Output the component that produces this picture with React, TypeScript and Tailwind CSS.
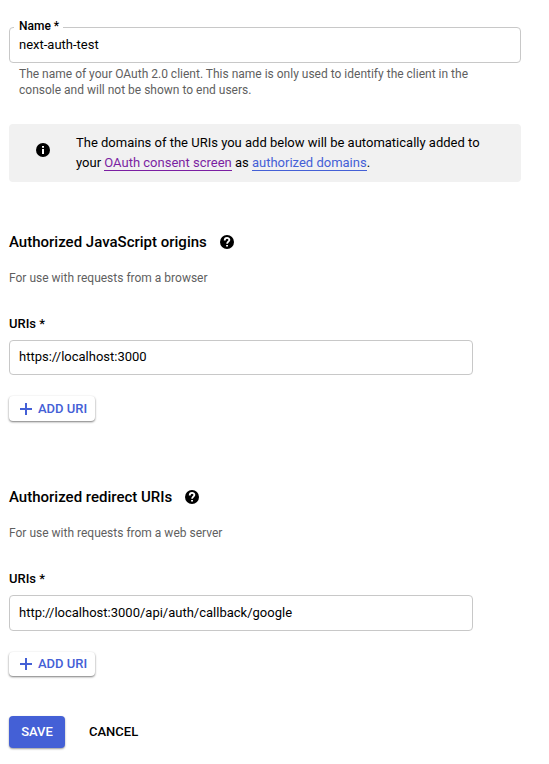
import React from "react";

function Help() {
  return (
    <svg viewBox="0 0 14 14" className="h-[14px] w-[14px] shrink-0" fill="none">
      <circle cx="7" cy="7" r="7" fill="#000" />
      <path d="M4.700 5.400C4.700 2.100 9.400 2.300 9.400 5.100C9.400 6.500 7.100 6.600 7.100 8.700" stroke="#fff" strokeWidth="1.800" />
      <path d="M6.100 9.900h1.900v1.700H6.100z" fill="#fff" />
    </svg>
  );
}

type SectionProps = { title: string; note: string; value: string; tall?: boolean };

function Section({ title, note, value, tall }: SectionProps) {
  return (
    <section className="h-[255px]">
      <div className="flex h-5 items-center gap-[13px]">
        <h2 className="text-[15px] leading-5 font-medium whitespace-nowrap">{title}</h2>
        <Help />
      </div>
      <p className="mt-[18px] text-xs leading-4 text-[#5f5f5f]">{note}</p>
      <p className="mt-[30px] text-[13px] leading-4 font-medium">URIs *</p>
      <div className={`mt-2 flex w-[464px] items-center rounded border border-[#c8c8c8] px-[9px] text-[13px] ${tall ? "h-9" : "h-[35px] pb-[2px]"}`}>{value}</div>
      <button className={`mt-[21px] flex w-[86px] items-center rounded-[4px] pl-[11px] text-[13px] leading-5 font-medium text-[#4460d6] shadow-[0_1px_2px_rgba(0,0,0,0.45),0_1px_3px_rgba(0,0,0,0.1)] ${tall ? "h-6" : "h-[25px] pt-px"}`}>
        <svg viewBox="0 0 12 12" className="mr-[6px] h-3 w-3" stroke="currentColor" strokeWidth="2">
          <path d="M6 0v12M0 6h12" />
        </svg>
        ADD URI
      </button>
    </section>
  );
}

export default function App() {
  return (
    <main className="h-[764px] w-[549px] overflow-hidden bg-white pt-[27px] pl-[9px] font-[Roboto,sans-serif] text-black">
      <div className="relative flex h-9 w-[512px] items-center rounded border border-[#c8c8c8] px-[9px] text-[13px]">
        <span className="absolute -top-[10px] left-[4px] bg-white pr-1 pl-[5px] text-xs leading-4 font-medium">Name *</span>
        next-auth-test
      </div>
      <p className="mt-[3px] ml-[10px] text-xs leading-4 text-[#5f5f5f]">
        The name of your OAuth 2.0 client. This name is only used to identify the client in the
        <br />
        console and will not be shown to end users.
      </p>
      <div className="mt-[26px] flex h-[58px] w-[512px] items-center rounded bg-[#f1f1f1] pl-[27px] text-[13px] leading-5">
        <svg viewBox="0 0 14 14" className="mr-[26px] -mt-[6px] h-[14px] w-[14px]">
          <circle cx="7" cy="7" r="7" fill="#000" />
          <path d="M6 3h2v1.800H6zM6 6h2v5H6z" fill="#fff" />
        </svg>
        <p>
          The domains of the URIs you add below will be automatically added to
          <br />
          your <a className="border-b border-current text-[#7b1fa2]">OAuth consent screen</a> as <a className="border-b border-current text-[#4460d6]">authorized domains</a>.
        </p>
      </div>
      <div className="mt-[50px]">
        <Section title="Authorized JavaScript origins" note="For use with requests from a browser" value="https://localhost:3000" />
        <Section title="Authorized redirect URIs" note="For use with requests from a web server" value="http://localhost:3000/api/auth/callback/google" tall />
      </div>
      <div className="-mt-[26px] flex items-center text-[13px] font-medium">
        <button className="h-8 w-14 rounded-[4px] bg-[#4460d6] text-white shadow-[0_1px_2px_rgba(0,0,0,0.4)]">SAVE</button>
        <button className="ml-6">CANCEL</button>
      </div>
    </main>
  );
}
